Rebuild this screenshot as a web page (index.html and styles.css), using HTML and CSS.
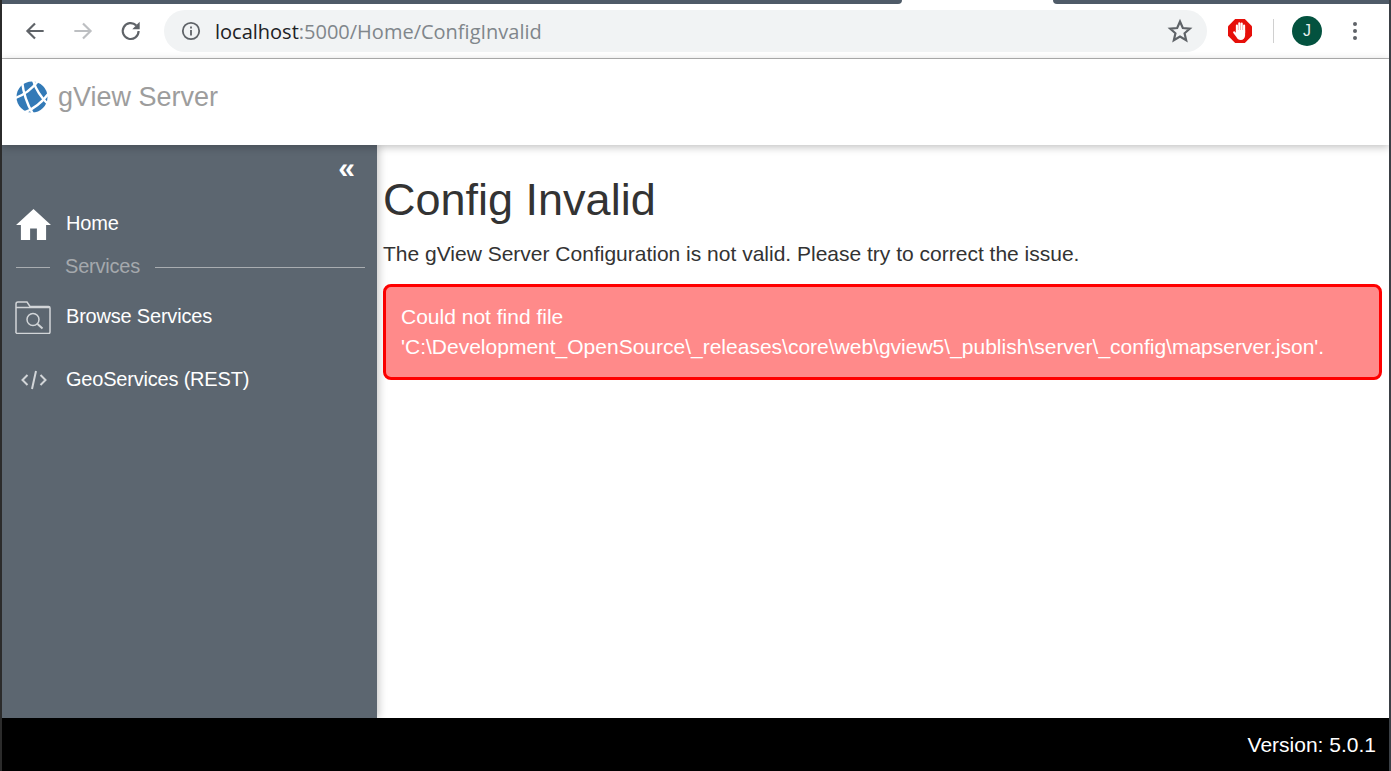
FILE: index.html
```html
<!DOCTYPE html>
<html lang="en">
<head>
<meta charset="utf-8">
<title>gView Server</title>
<link rel="stylesheet" href="styles.css">
</head>
<body>
<div class="window">
  <div class="tabstrip">
    <div class="tab-dark tab-left"></div>
    <div class="tab-active"></div>
    <div class="tab-dark tab-right"></div>
  </div>
  <div class="toolbar">
    <svg class="nav-icon back" viewBox="0 0 24 24"><path d="M20 12H5M12 5l-7 7 7 7" fill="none" stroke="#5f6368" stroke-width="2"/></svg>
    <svg class="nav-icon forward" viewBox="0 0 24 24"><path d="M4 12h15M12 5l7 7-7 7" fill="none" stroke="#bdbfc2" stroke-width="2"/></svg>
    <svg class="nav-icon reload" viewBox="0 0 24 24"><path d="M19 12a7.300 7.300 0 1 1-2.200-5.200" fill="none" stroke="#5f6368" stroke-width="2"/><path d="M20 3.500v6.800h-6.800z" fill="#5f6368"/></svg>
    <div class="omnibox">
      <svg class="info-icon" viewBox="0 0 20 20"><circle cx="10" cy="10" r="8.200" fill="none" stroke="#5f6368" stroke-width="1.800"/><path d="M9.100 9h1.800v5.500H9.100zM9.100 5.600h1.800v1.800H9.100z" fill="#5f6368"/></svg>
      <div class="url"><span class="url-host">localhost</span>:5000/Home/ConfigInvalid</div>
      <svg class="star-icon" viewBox="0 0 24 24"><path d="M12 3.200l2.600 6 6.500.6-4.900 4.300 1.500 6.400L12 17.100l-5.700 3.400 1.500-6.400-4.900-4.300 6.500-.6z" fill="none" stroke="#5f6368" stroke-width="2" stroke-linejoin="miter"/></svg>
    </div>
    <svg class="adblock" viewBox="0 0 24 24">
      <path d="M7.200 0h9.600L24 7.200v9.600L16.800 24H7.200L0 16.800V7.200z" fill="#e60f0a"/>
      <path d="M8.900 14V6.500M11.300 13V4.300M13.700 13V4.500M16.100 14V6.500" stroke="#fff" stroke-width="2.100" stroke-linecap="round" fill="none"/>
      <path d="M7.900 11h9.200v5.500c0 2.700-2 4.500-4.300 4.500-2.200 0-3.500-1.300-4.400-3L5.300 14c-.7-1.300.7-2.200 1.600-1.300l1 1z" fill="#fff"/>
    </svg>
    <div class="toolbar-sep"></div>
    <div class="avatar">J</div>
    <div class="kebab"><span></span><span></span><span></span></div>
  </div>
  <header class="app-header">
    <svg class="logo" viewBox="0 0 32 32">
      <circle cx="16" cy="16" r="15.500" fill="#337ab7"/>
      <g fill="none" stroke="#fff" stroke-width="2.400">
        <path d="M-1 17Q12 13 23 -1"/>
        <path d="M7 32Q22 27 33 12"/>
        <path d="M6 0Q8 18 17 33"/>
        <path d="M17 -1Q21 13 33 24"/>
      </g>
    </svg>
    <div class="brand">gView Server</div>
  </header>
  <div class="main-row">
    <nav class="sidebar">
      <div class="collapse">«</div>
      <a class="nav-item nav-home">
        <span class="nav-glyph">
          <svg class="home-icon" viewBox="0 0 36 32"><path d="M18 0L36 16.500H31V32H21.500V20H14.500V32H5V16.500H0z" fill="#fff"/></svg>
        </span>
        <span>Home</span>
      </a>
      <div class="nav-section"><span class="section-line short"></span><span class="section-label">Services</span><span class="section-line long"></span></div>
      <a class="nav-item nav-browse">
        <span class="nav-glyph">
          <svg class="browse-icon" viewBox="0 0 36 33"><path d="M1 30.500V3a2 2 0 0 1 2-2h9l3 4.500h18.500a1.500 1.500 0 0 1 1.500 1.500v24a1.500 1.500 0 0 1-1.500 1.500H2.500A1.500 1.500 0 0 1 1 30.500zM1 6.500h34" fill="none" stroke="#d2d5d8" stroke-width="1.500"/><circle cx="18" cy="18.500" r="6" fill="none" stroke="#d2d5d8" stroke-width="1.500"/><path d="M22.500 23l5 4.500" stroke="#d2d5d8" stroke-width="2" fill="none"/></svg>
        </span>
        <span>Browse Services</span>
      </a>
      <a class="nav-item nav-rest">
        <span class="nav-glyph">
          <svg class="code-icon" viewBox="0 0 26 20"><path d="M6.500 5L1.500 10l5 5M19.500 5l5 5-5 5M15 1l-4 18" fill="none" stroke="#d2d5d8" stroke-width="2"/></svg>
        </span>
        <span>GeoServices (REST)</span>
      </a>
    </nav>
    <main class="content">
      <h1 class="title">Config Invalid</h1>
      <p class="lead">The gView Server Configuration is not valid. Please try to correct the issue.</p>
      <div class="alert">Could not find file<br>'C:\Development_OpenSource\_releases\core\web\gview5\_publish\server\_config\mapserver.json'.</div>
    </main>
  </div>
  <footer class="footer">Version: 5.0.1</footer>
</div>
</body>
</html>
```
FILE: styles.css
```css
* { box-sizing: border-box; }
html, body { margin: 0; padding: 0; height: 100%; background: #fff; overflow: hidden; }
body { font-family: "Liberation Sans", Arial, sans-serif; }
.window {
  width: 1391px;
  height: 771px;
  display: flex;
  flex-direction: column;
  border-left: 2px solid #2b2b2b;
  border-right: 2px solid #3a3f45;
  overflow: hidden;
}
.tabstrip { height: 4px; display: flex; flex: none; }
.tab-dark { background: #4f5b68; }
.tab-left { width: 900px; border-bottom-right-radius: 6px; }
.tab-active { width: 151px; background: #fff; }
.tab-right { flex: 1; border-bottom-left-radius: 6px; }
.toolbar {
  height: 55px;
  flex: none;
  display: flex;
  align-items: center;
  background: #fff;
  border-bottom: 1px solid #b4b4b4;
  padding: 0 0 0 20px;
}
.nav-icon { width: 26px; height: 26px; flex: none; }
.forward { margin-left: 22px; }
.reload { margin-left: 22px; }
.omnibox {
  margin-left: 20px;
  width: 1043px;
  height: 42px;
  border-radius: 21px;
  background: #f1f3f4;
  display: flex;
  align-items: center;
  padding: 0 14px 0 17px;
}
.info-icon { width: 20px; height: 20px; flex: none; }
.url {
  flex: 1;
  margin-left: 14px;
  font-family: "Open Sans", "Noto Sans", sans-serif;
  font-size: 20px;
  color: #80868b;
  white-space: nowrap;
}
.url-host { color: #202124; }
.star-icon { width: 26px; height: 26px; flex: none; }
.adblock { width: 24px; height: 24px; margin-left: 21px; flex: none; }
.toolbar-sep { width: 1px; height: 24px; background: #d0d0d0; margin-left: 21px; flex: none; }
.avatar {
  width: 30px;
  height: 30px;
  border-radius: 50%;
  background: #03523f;
  color: #e8f0ee;
  font-size: 16px;
  line-height: 30px;
  text-align: center;
  margin-left: 18px;
  flex: none;
}
.kebab { margin-left: 31px; display: flex; flex-direction: column; gap: 3px; flex: none; }
.kebab span { width: 4px; height: 4px; border-radius: 50%; background: #5f6368; display: block; }
.app-header {
  height: 86px;
  flex: none;
  display: flex;
  align-items: flex-start;
  padding: 22px 0 0 14px;
  background: #fff;
  box-shadow: 0 2px 8px rgba(0, 0, 0, 0.25);
  position: relative;
  z-index: 2;
}
.logo { width: 32px; height: 32px; flex: none; }
.brand { margin-left: 10px; font-size: 27px; line-height: 33px; color: #9d9d9d; }
.main-row { flex: 1; display: flex; min-height: 0; }
.sidebar {
  width: 375px;
  flex: none;
  background: #5c6670;
  color: #fff;
  box-shadow: 2px 0 8px rgba(0, 0, 0, 0.22);
  position: relative;
  z-index: 1;
  padding: 8px 12px 0 14px;
  font-size: 20px;
}
.collapse {
  text-align: right;
  padding-right: 10px;
  font-size: 30px;
  font-weight: 700;
  line-height: 30px;
  height: 30px;
}
.nav-item { display: flex; align-items: center; color: #fff; letter-spacing: -0.2px; }
.nav-home { margin-top: 21px; height: 38px; }
.nav-browse { margin-top: 17px; height: 40px; }
.nav-rest { margin-top: 23px; height: 40px; }
.nav-glyph { width: 36px; margin-right: 14px; display: flex; justify-content: center; flex: none; }
.nav-home .nav-glyph { padding-top: 2px; margin-left: -1px; margin-right: 15px; }
.nav-browse .nav-glyph { padding-top: 3px; margin-left: -1px; margin-right: 15px; }
.nav-rest .nav-glyph { padding-top: 2px; }
.home-icon { width: 35px; height: 31px; }
.browse-icon { width: 36px; height: 33px; }
.code-icon { width: 26px; height: 20px; }
.nav-section { display: flex; align-items: center; height: 26px; margin-top: 11px; color: #a5a9ad; }
.section-line { height: 1px; background: #a9adb1; }
.section-line.short { width: 34px; margin-top: 2px; }
.section-line.long { flex: 1; margin-top: 2px; }
.section-label { margin: 0 15px 0 15px; letter-spacing: -0.2px; }
.content { flex: 1; background: #fff; padding: 0 7px 0 6px; color: #333; min-width: 0; }
.title { margin: 28px 0 0; font-size: 45px; line-height: 54px; font-weight: 400; }
.lead { margin: 13px 0 0; font-size: 21px; line-height: 28px; }
.alert {
  margin-top: 16px;
  height: 96px;
  padding: 15px 15px 0;
  border: 3px solid #f00;
  border-radius: 8px;
  background: #ff8a8a;
  color: #fff;
  font-size: 21px;
  line-height: 30px;
  white-space: nowrap;
}
.footer {
  height: 53px;
  flex: none;
  background: #000;
  color: #fff;
  font-size: 21px;
  line-height: 53px;
  text-align: right;
  padding-right: 13px;
}
```
